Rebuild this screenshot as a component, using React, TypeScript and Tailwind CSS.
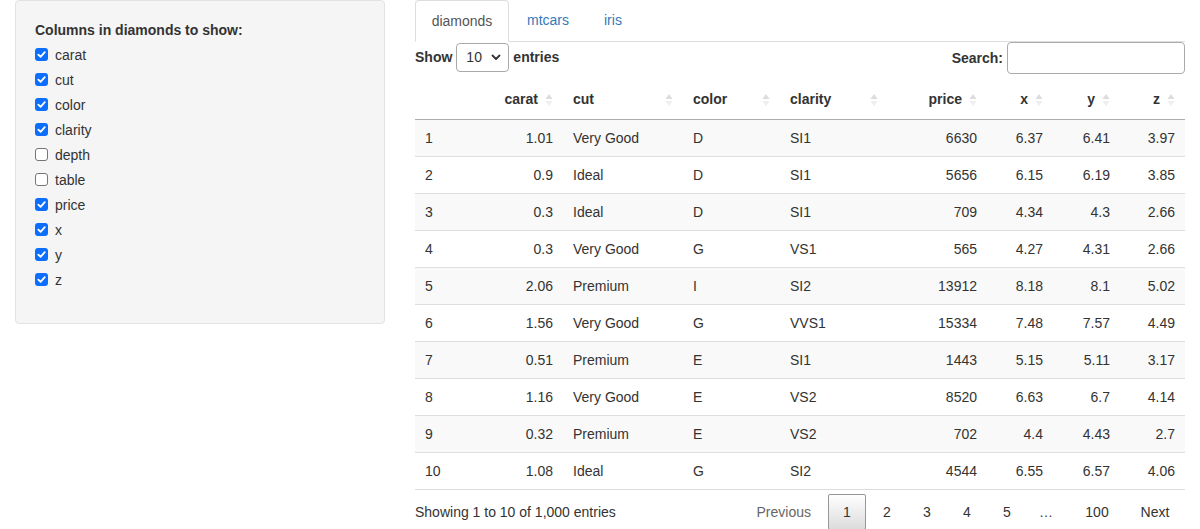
import React from 'react';

const columns = ['carat', 'cut', 'color', 'clarity', 'depth', 'table', 'price', 'x', 'y', 'z'];
const shown = ['carat', 'cut', 'color', 'clarity', 'price', 'x', 'y', 'z'];

const headers = [
  { name: '', w: 'w-[55px]', right: false, sort: false },
  { name: 'carat', w: 'w-[93px]', right: true, sort: true },
  { name: 'cut', w: 'w-[120px]', right: false, sort: true },
  { name: 'color', w: 'w-[97px]', right: false, sort: true },
  { name: 'clarity', w: 'w-[108px]', right: false, sort: true },
  { name: 'price', w: 'w-[99px]', right: true, sort: true },
  { name: 'x', w: 'w-[66px]', right: true, sort: true },
  { name: 'y', w: 'w-[67px]', right: true, sort: true },
  { name: 'z', w: 'w-[65px]', right: true, sort: true },
];

const rows = [
  ['1', '1.01', 'Very Good', 'D', 'SI1', '6630', '6.37', '6.41', '3.97'],
  ['2', '0.9', 'Ideal', 'D', 'SI1', '5656', '6.15', '6.19', '3.85'],
  ['3', '0.3', 'Ideal', 'D', 'SI1', '709', '4.34', '4.3', '2.66'],
  ['4', '0.3', 'Very Good', 'G', 'VS1', '565', '4.27', '4.31', '2.66'],
  ['5', '2.06', 'Premium', 'I', 'SI2', '13912', '8.18', '8.1', '5.02'],
  ['6', '1.56', 'Very Good', 'G', 'VVS1', '15334', '7.48', '7.57', '4.49'],
  ['7', '0.51', 'Premium', 'E', 'SI1', '1443', '5.15', '5.11', '3.17'],
  ['8', '1.16', 'Very Good', 'E', 'VS2', '8520', '6.63', '6.7', '4.14'],
  ['9', '0.32', 'Premium', 'E', 'VS2', '702', '4.4', '4.43', '2.7'],
  ['10', '1.08', 'Ideal', 'G', 'SI2', '4544', '6.55', '6.57', '4.06'],
];

function Check({ on }: { on: boolean }) {
  if (!on) {
    return <span className="w-[13px] h-[13px] rounded-[3px] border border-[#767676] bg-white shrink-0" />;
  }
  return (
    <span className="w-[13px] h-[13px] rounded-[3px] bg-[#0b6efd] shrink-0 flex items-center justify-center">
      <svg width="9" height="9" viewBox="0 0 10 10">
        <path d="M1.5 5.2 L4 7.6 L8.6 2.4" fill="none" stroke="white" strokeWidth="2" strokeLinecap="round" strokeLinejoin="round" />
      </svg>
    </span>
  );
}

function SortIcon() {
  return (
    <svg width="8" height="14" viewBox="0 0 8 14" className="shrink-0">
      <path d="M4 1 L7.5 6 L0.5 6 Z" fill="#dddddd" />
      <path d="M4 13 L7.5 8 L0.5 8 Z" fill="#eeeeee" />
    </svg>
  );
}

export default function App() {
  return (
    <div className="w-[1200px] h-[529px] overflow-hidden bg-white text-[#333] text-[14px] font-['Liberation_Sans',Arial,sans-serif] flex items-start">
      <div className="w-[400px] pl-[15px] pr-[15px] shrink-0">
        <div className="h-[324px] bg-[#f5f5f5] border border-[#e3e3e3] rounded-[4px] px-[19px] pt-[19px]">
          <div className="font-bold leading-[20px] mb-[2px]">Columns in diamonds to show:</div>
          <div className="flex flex-col">
            {columns.map((c) => (
              <div key={c} className="h-[25px] flex items-center gap-[7px]">
                <Check on={shown.includes(c)} />
                <span className="leading-[20px]">{c}</span>
              </div>
            ))}
          </div>
        </div>
      </div>

      <div className="w-[770px] ml-[15px] shrink-0">
        <div className="flex h-[42px] border-b border-[#dddddd]">
          <div className="h-[42px] px-[15px] w-[94px] border border-[#dddddd] border-b-white rounded-t-[4px] bg-white flex items-center justify-center text-[#555]">
            diamonds
          </div>
          <div className="h-[41px] px-[18px] flex items-center text-[#337ab7]">mtcars</div>
          <div className="h-[41px] pl-[17px] pr-[15px] flex items-center text-[#337ab7]">iris</div>
        </div>

        <div className="flex items-start justify-between h-[32px]">
          <div className="flex items-center gap-[4px] font-bold h-[29px] pt-[1px]">
            <span>Show</span>
            <div className="w-[53px] h-[29px] border border-[#aaa] rounded-[4px] flex items-center justify-between pl-[9px] pr-[7px] font-normal">
              <span>10</span>
              <svg width="10" height="7" viewBox="0 0 10 7">
                <path d="M1.5 1.5 L5 5 L8.5 1.5" fill="none" stroke="#333" strokeWidth="1.8" strokeLinecap="round" strokeLinejoin="round" />
              </svg>
            </div>
            <span>entries</span>
          </div>
          <div className="flex items-center gap-[4px] font-bold h-[32px]">
            <span className="pt-[1px]">Search:</span>
            <div className="w-[178px] h-[32px] border border-[#aaa] rounded-[4px] bg-white" />
          </div>
        </div>

        <div className="mt-[6px] flex border-b border-[#adadad] h-[40px] items-center font-bold">
          {headers.map((h, i) => (
            <div key={i} className={`${h.w} h-full flex items-center ${h.right ? 'justify-end pr-[10px]' : 'pl-[10px] pr-[10px] justify-between'}`}>
              {h.right ? (
                <>
                  <span>{h.name}</span>
                  <span className="ml-[7px]">{h.sort ? <SortIcon /> : null}</span>
                </>
              ) : (
                <>
                  <span>{h.name}</span>
                  {h.sort ? <SortIcon /> : null}
                </>
              )}
            </div>
          ))}
        </div>

        {rows.map((r, ri) => (
          <div key={ri} className={`flex h-[37px] items-center border-b border-[#dddddd] ${ri % 2 === 0 ? 'bg-[#f9f9f9]' : 'bg-white'} ${ri === rows.length - 1 ? 'border-[#adadad]' : ''}`}>
            {r.map((v, ci) => (
              <div key={ci} className={`${headers[ci].w} px-[10px] ${headers[ci].right ? 'text-right' : 'text-left'}`}>
                {v}
              </div>
            ))}
          </div>
        ))}

        <div className="flex items-start justify-between">
          <div className="pt-[12px]">Showing 1 to 10 of 1,000 entries</div>
          <div className="flex items-center mt-[4px] h-[36px] mr-[4px]">
            <span className="px-[13px] text-[#666] pt-[1px]">Previous</span>
            <span className="w-[38px] h-[36px] ml-[4px] mr-[1px] border border-[#979797] rounded-[2px] bg-gradient-to-b from-white to-[#dcdcdc] flex items-center justify-center pt-[1px]">1</span>
            <span className="w-[40px] text-center pt-[1px]">2</span>
            <span className="w-[40px] text-center pt-[1px]">3</span>
            <span className="w-[40px] text-center pt-[1px]">4</span>
            <span className="w-[40px] text-center pt-[1px]">5</span>
            <span className="w-[38px] text-center pt-[1px]">…</span>
            <span className="w-[64px] text-center pt-[1px]">100</span>
            <span className="w-[52px] text-center pt-[1px]">Next</span>
          </div>
        </div>
      </div>
    </div>
  );
}
